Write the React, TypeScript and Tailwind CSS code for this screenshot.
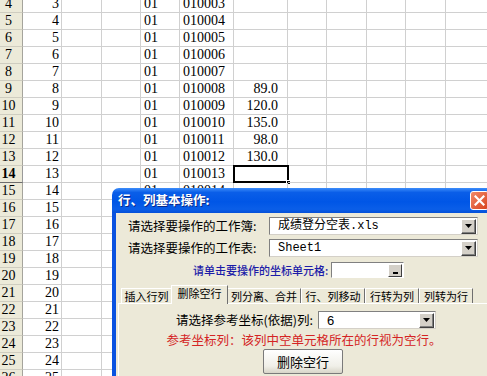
import React from "react";

const COLS = [39, 40, 39, 39, 54, 54, 39, 40, 39, 40, 50];
const F_VALUES: Record<number, string> = {
  9: "89.0",
  10: "120.0",
  11: "135.0",
  12: "98.0",
  13: "130.0",
};

const rows = Array.from({ length: 23 }, (_, i) => i + 4);

const cjk = "font-['SimSun','Noto_Sans_CJK_SC',sans-serif] whitespace-nowrap";

function DropBtn() {
  return (
    <div className="flex h-[15px] w-[15px] items-center justify-center border border-t-white border-l-white border-r-[#404040] border-b-[#404040] bg-[#d4d0c8] shadow-[inset_-1px_-1px_0_#808080]">
      <svg width="7" height="4" viewBox="0 0 7 4">
        <path d="M0 0h7L3.5 4z" fill="#000" />
      </svg>
    </div>
  );
}

function Combo({ value, width, mono }: { value: string; width: number; mono?: boolean }) {
  return (
    <div
      className="flex h-[18px] shrink-0 items-center justify-between border border-t-[#808080] border-l-[#808080] border-r-[#d4d0c8] border-b-[#d4d0c8] bg-white pl-[8px] pr-[1px]"
      style={{ width }}
    >
      <span
        className={
          mono
            ? "whitespace-nowrap font-['Liberation_Mono','Noto_Sans_CJK_SC',monospace] text-[12px] leading-none text-black"
            : "font-['Liberation_Sans',sans-serif] text-[13px] leading-none text-black"
        }
      >
        {value}
      </span>
      <DropBtn />
    </div>
  );
}

const TABS = [
  { label: "插入行列", w: 51 },
  { label: "删除空行", w: 57, active: true },
  { label: "列分离、合并", w: 74 },
  { label: "行、列移动", w: 64 },
  { label: "行转为列", w: 54 },
  { label: "列转为行", w: 54 },
];

export default function App() {
  return (
    <div className="relative h-[376px] w-[487px] overflow-hidden bg-white">
      {/* sheet */}
      <div className="-mt-[4px] flex flex-col">
        {rows.map((r) => (
          <div key={r} className="flex h-[17px]">
            <div
              className={`flex w-[23px] shrink-0 items-end justify-center border-r border-b bg-[#ecead9] pb-[1px] pr-[5px] font-['Liberation_Serif',serif] text-[14px] leading-none text-black ${
                r === 14 ? "border-b-[#6d6d6d] border-r-[#9a9a9a] font-bold" : "border-b-[#cfcdc0] border-r-[#a5a49c]"
              }`}
            >
              {r}
            </div>
            {COLS.map((w, c) => {
              let text = "";
              let align = "justify-start pl-[3px]";
              if (c === 0) {
                text = String(r - 1);
                align = "justify-end pr-[2px]";
              } else if (c === 3 && r <= 15) {
                text = "01";
              } else if (c === 4 && r <= 15) {
                text = "0100" + String(r - 1).padStart(2, "0");
              } else if (c === 5 && F_VALUES[r]) {
                text = F_VALUES[r];
                align = "justify-end pr-[9px]";
              }
              return (
                <div
                  key={c}
                  className={`relative flex shrink-0 items-end border-r border-b border-[#d0d0d0] pb-[1px] font-['Liberation_Serif',serif] text-[14px] leading-none text-black ${align}`}
                  style={{ width: w }}
                >
                  {text}
                  {r === 14 && c === 5 && (
                    <div className="absolute -top-[1px] -left-[1px] h-[18px] w-[56px] border-[2px] border-black">
                      <div className="absolute -right-[4px] -bottom-[4px] h-[5px] w-[5px] border border-white bg-black" />
                    </div>
                  )}
                </div>
              );
            })}
          </div>
        ))}
      </div>

      {/* dialog */}
      <div className="absolute left-[112px] top-[188px] flex w-[381px] flex-col">
        <div className="flex h-[25px] items-center justify-between rounded-t-[7px] bg-[linear-gradient(180deg,#3d8dfa_0%,#0a5ee8_18%,#0056e6_55%,#0a5ee8_85%,#0550d8_100%)] pl-[6px] pr-[4px]">
          <span className={`${cjk} text-[12.5px] font-bold leading-none text-white [text-shadow:1px_1px_0_#0a2a8a]`}>
            行、列基本操作:
          </span>
          <div className="flex h-[19px] w-[19px] items-center justify-center rounded-[3px] border border-white bg-[linear-gradient(135deg,#f08a6a,#d9411c)]">
            <svg width="11" height="11" viewBox="0 0 11 11">
              <path d="M1.5 1.5l8 8M9.5 1.5l-8 8" stroke="#fff" strokeWidth="2.2" strokeLinecap="square" />
            </svg>
          </div>
        </div>

        <div className="flex h-[170px] flex-col border-x-[4px] border-[#0a52e0] bg-[#ece9d8]">
          <div className="mt-[4px] flex h-[18px] items-center">
            <div className={`flex w-[153px] shrink-0 items-center pl-[12px] ${cjk} text-[12.5px] leading-none text-black`}>
              请选择要操作的工作簿:
            </div>
            <Combo value="成绩登分空表.xls" width={209} mono />
          </div>
          <div className="mt-[4px] flex h-[18px] items-center">
            <div className={`flex w-[153px] shrink-0 items-center pl-[12px] ${cjk} text-[12.5px] leading-none text-black`}>
              请选择要操作的工作表:
            </div>
            <Combo value="Sheet1" width={209} mono />
          </div>
          <div className="mt-[5px] flex h-[16px] items-center pl-[77px]">
            <span className={`${cjk} text-[11px] font-medium leading-none text-[#1c1ca8]`}>
              请单击要操作的坐标单元格:
            </span>
            <div className="ml-[3px] flex h-[16px] w-[73px] items-center justify-end border border-t-[#808080] border-l-[#808080] border-r-white border-b-white bg-white pr-[1px]">
              <div className="flex h-[13px] w-[14px] items-end justify-center border border-t-white border-l-white border-r-[#404040] border-b-[#404040] bg-[#d4d0c8] pb-[2px]">
                <div className="h-[2px] w-[5px] bg-black" />
              </div>
            </div>
          </div>

          {/* tabs */}
          <div className="mt-[7px] flex items-end pl-[5px]">
            {TABS.map((t) => (
              <div
                key={t.label}
                className={`flex shrink-0 items-center justify-center border-t border-l border-r border-t-white border-l-white border-r-[#6f6f6f] ${cjk} text-[11px] leading-none text-black ${
                  t.active ? "relative z-10 -mx-[1px] h-[19px] bg-[#ece9d8] pb-[3px]" : "h-[16px] bg-[#ece9d8]"
                }`}
                style={{ width: t.w }}
              >
                {t.label}
              </div>
            ))}
          </div>
          <div className="-mt-[1px] mx-[2px] flex flex-1 flex-col items-center border-t border-l border-t-white border-l-white bg-[#ece9d8]">
            <div className="mt-[7px] flex h-[18px] items-center pl-[6px]">
              <span className={`${cjk} text-[12.5px] leading-none text-black`}>
                请选择参考坐标(依据)列:
              </span>
              <div className="ml-[5px]">
                <Combo value="6" width={118} />
              </div>
            </div>
            <div className={`mt-[5px] pl-[2px] ${cjk} text-[12.5px] leading-none text-[#d42424]`}>
              参考坐标列：该列中空单元格所在的行视为空行。
            </div>
            <div
              className={`mt-[2px] flex h-[25px] w-[80px] items-center justify-center rounded-[2px] border border-[#7a7a7a] bg-[linear-gradient(180deg,#ffffff,#f0efe8_70%,#d8d5c8)] ${cjk} text-[13px] leading-none text-black`}
            >
              删除空行
            </div>
          </div>
        </div>
      </div>
    </div>
  );
}
